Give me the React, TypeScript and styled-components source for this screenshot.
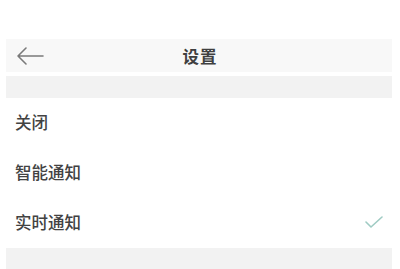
import React from 'react';
import styled, { createGlobalStyle } from 'styled-components';

const GlobalStyle = createGlobalStyle`
  html, body {
    margin: 0;
    padding: 0;
    background: #ffffff;
  }
  body {
    font-family: "Noto Sans CJK SC", "Noto Sans", sans-serif;
  }
`;

const options = [
  { id: 'off', label: '关闭' },
  { id: 'smart', label: '智能通知' },
  { id: 'realtime', label: '实时通知' }
];

const Page = styled.div`
  padding: 39px 8px 0 6px;
  height: 269px;
  box-sizing: border-box;
  overflow: hidden;
`;

const Header = styled.div`
  position: relative;
  display: flex;
  align-items: center;
  justify-content: center;
  height: 33px;
  background: #f8f8f8;
`;

const BackButton = styled.button`
  position: absolute;
  left: 10px;
  top: 50%;
  transform: translateY(-50%);
  display: flex;
  align-items: center;
  padding: 0;
  border: none;
  background: none;
`;

const Title = styled.h1`
  margin: 0 0 0 2px;
  font-size: 16.5px;
  font-weight: 700;
  color: #404040;
  letter-spacing: 1px;
`;

const Band = styled.div<{ top?: number }>`
  margin-top: ${(p) => p.top ?? 0}px;
  height: 22px;
  background: #f2f2f2;
`;

const List = styled.ul`
  margin: 0;
  padding: 0;
  list-style: none;
`;

const Row = styled.li`
  display: flex;
  align-items: center;
  justify-content: space-between;
  height: 50px;
  padding: 0 9px 3px 9px;
  box-sizing: border-box;
`;

const RowLabel = styled.span`
  font-size: 16.5px;
  font-weight: 500;
  color: #424242;
`;

export default function App() {
  const selected = 'realtime';
  return (
    <>
      <GlobalStyle />
      <Page>
        <Header>
          <BackButton aria-label="返回">
            <svg width="28" height="20" viewBox="0 0 28 20" fill="none">
              <path
                d="M27 10H2M10 2L2 10l8 8"
                stroke="#7a7a7a"
                strokeWidth="1.6"
                strokeLinecap="round"
                strokeLinejoin="round"
              />
            </svg>
          </BackButton>
          <Title>设置</Title>
        </Header>
        <Band top={4} />
        <List>
          {options.map((o) => (
            <Row key={o.id}>
              <RowLabel>{o.label}</RowLabel>
              {o.id === selected && (
                <svg width="18" height="12" viewBox="0 0 18 12" fill="none">
                  <path
                    d="M1 6l5 5L17 1"
                    stroke="#9fcbc3"
                    strokeWidth="1.6"
                    strokeLinecap="round"
                    strokeLinejoin="round"
                  />
                </svg>
              )}
            </Row>
          ))}
        </List>
        <Band />
      </Page>
    </>
  );
}
